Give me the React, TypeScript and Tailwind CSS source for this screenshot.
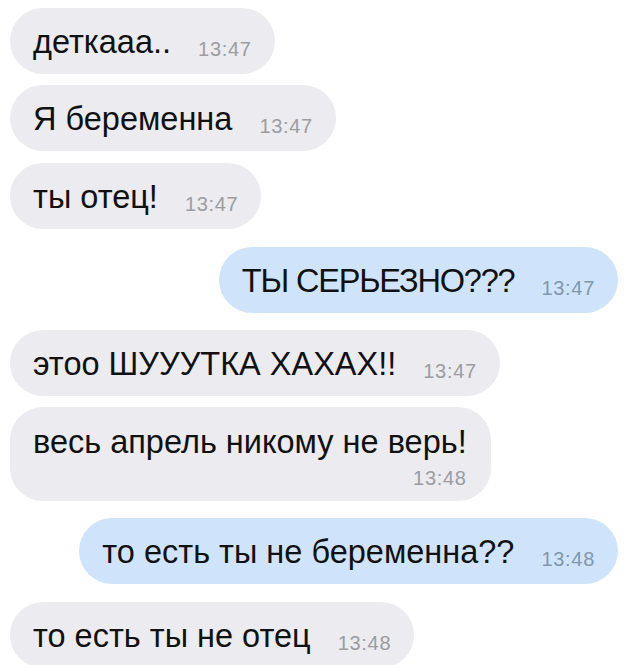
import React from "react";

type Msg = { text: string; time: string; out?: boolean; multi?: boolean; caps?: boolean; gap: string };

const msgs: Msg[] = [
  { text: "деткааа..", time: "13:47", gap: "mt-[8px]" },
  { text: "Я беременна", time: "13:47", gap: "mt-[11px]" },
  { text: "ты отец!", time: "13:47", gap: "mt-[12px]" },
  { text: "ТЫ СЕРЬЕЗНО???", time: "13:47", out: true, caps: true, gap: "mt-[18px]" },
  { text: "этоо ШУУУТКА ХАХАХ!!", time: "13:47", gap: "mt-[17px]" },
  { text: "весь апрель никому не верь!", time: "13:48", multi: true, gap: "mt-[11px]" },
  { text: "то есть ты не беременна??", time: "13:48", out: true, gap: "mt-[17px]" },
  { text: "то есть ты не отец", time: "13:48", gap: "mt-[18px]" },
];

function Bubble({ m }: { m: Msg }) {
  const side = m.out ? "self-end mr-[22px] bg-[#cfe4fb]" : "self-start ml-[10px] bg-[#ebebf0]";
  const timeColor = m.out ? "text-[#8296ab]" : "text-[#9c9ca2]";
  const track = m.caps ? "tracking-[-1.2px]" : "";
  if (m.multi) {
    return (
      <div className={`${m.gap} ${side} rounded-[33px] pl-[23px] pr-[24px] pt-[16px] pb-[11px] flex flex-col items-end`}>
        <span className="text-[32.5px] leading-[38px] text-[#111111] self-start whitespace-nowrap">{m.text}</span>
        <span className={`mt-[5px] text-[20px] tracking-[0.7px] leading-[24px] ${timeColor}`}>{m.time}</span>
      </div>
    );
  }
  return (
    <div className={`${m.gap} ${side} rounded-full pl-[23px] pr-[23px] pt-[15px] pb-[13px] flex items-baseline`}>
      <span className={`text-[32.5px] leading-[38px] text-[#111111] whitespace-nowrap ${track}`}>{m.text}</span>
      <span className={`ml-[27px] text-[20px] tracking-[0.7px] leading-[24px] translate-y-[3px] ${timeColor}`}>{m.time}</span>
    </div>
  );
}

export default function App() {
  return (
    <div
      className="w-[640px] h-[665px] overflow-hidden bg-white flex flex-col"
      style={{ fontFamily: '"Liberation Sans", Arial, sans-serif' }}
    >
      {msgs.map((m, i) => (
        <Bubble key={i} m={m} />
      ))}
    </div>
  );
}
